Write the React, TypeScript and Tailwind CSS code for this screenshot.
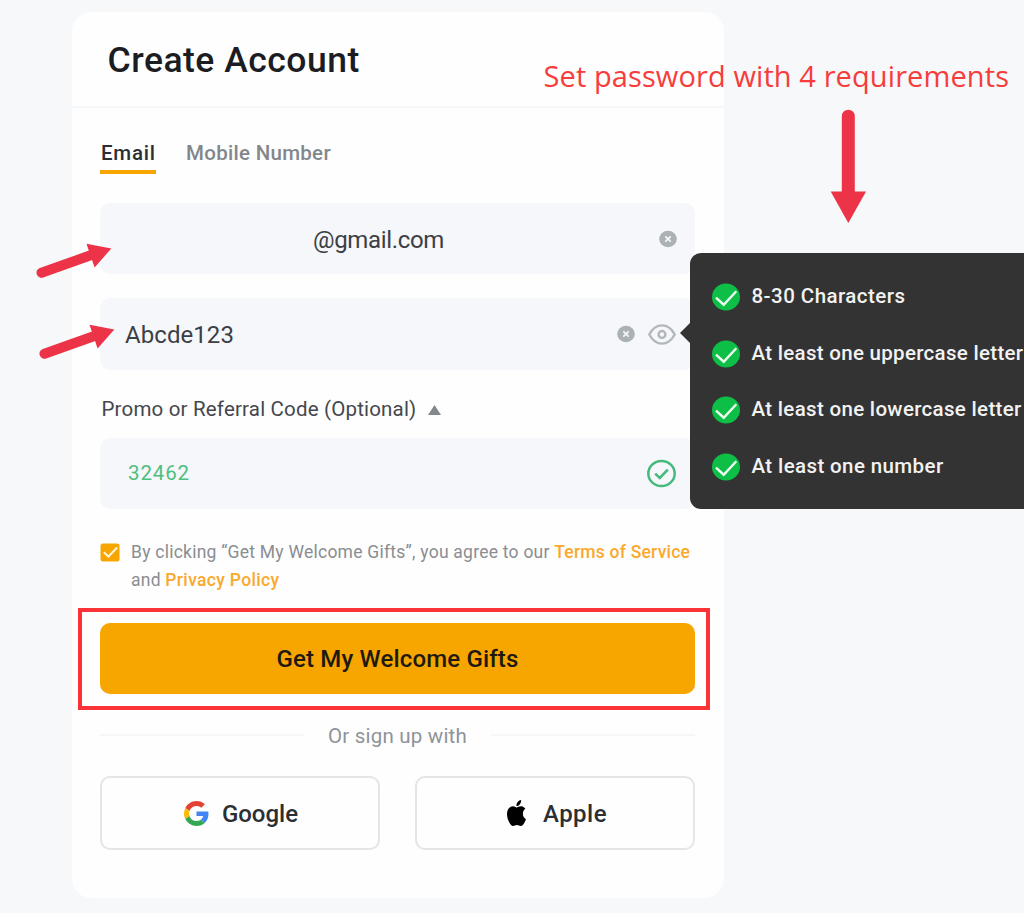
import type { ReactNode } from "react";

function ClearIcon() {
  return (
    <svg className="h-[18px] w-[18px] shrink-0" viewBox="0 0 18 18" fill="none">
      <ellipse cx="9" cy="9" rx="8.8" ry="8.3" fill="#acb1b4" />
      <path d="M6.3 6.4l5.4 5.2M11.7 6.4l-5.4 5.2" stroke="#f4f6f9" strokeWidth="1.8" />
    </svg>
  );
}

function EyeIcon() {
  return (
    <svg className="h-[21px] w-[28px] shrink-0" viewBox="0 0 28 21" fill="none" stroke="#b3b8bb" strokeWidth="2.4">
      <path d="M1.3 10.5C4.400 4.600 8.800 1.400 14 1.400s9.600 3.200 12.700 9.100c-3.100 5.900-7.500 9.100-12.700 9.100S4.400 16.400 1.300 10.500Z" strokeLinejoin="round" />
      <circle cx="14" cy="10.500" r="3.400" strokeWidth="2.500" />
    </svg>
  );
}

function ValidIcon() {
  return (
    <svg className="h-[29px] w-[29px] shrink-0" viewBox="0 0 29 29" fill="none" stroke="#46b97c">
      <ellipse cx="14.500" cy="14.500" rx="13.200" ry="12.600" strokeWidth="2.500" />
      <path d="M8.200 14.600l4.600 4.300 8-8.200" strokeWidth="2.600" />
    </svg>
  );
}

function RuleIcon() {
  return (
    <svg className="h-[28px] w-[28px] shrink-0" viewBox="0 0 28 28" fill="none">
      <ellipse cx="14" cy="14" rx="14" ry="13.500" fill="#0dbf47" />
      <path d="M4 14.700l7.700 7L24.300 8.300" stroke="#f1fff3" strokeWidth="2.400" />
    </svg>
  );
}

function CheckboxIcon() {
  return (
    <svg className="mt-[5px] h-[19px] w-[20px] shrink-0" viewBox="0 0 20 19" fill="none">
      <rect x="0.500" y="0.500" width="19" height="18" rx="2.500" fill="#f7a600" />
      <path d="M3.800 9.200l4.600 4.300 8.800-9" stroke="#fff4da" strokeWidth="2" />
    </svg>
  );
}

function GoogleIcon() {
  return (
    <svg className="h-[25px] w-[25px] shrink-0" viewBox="0 0 48 48">
      <path fill="#e34133" d="M24 9.500c3.540 0 6.710 1.220 9.210 3.600l6.850-6.850C35.900 2.380 30.470 0 24 0 14.620 0 6.510 5.380 2.560 13.220l7.980 6.190C12.430 13.720 17.740 9.500 24 9.500z" />
      <path fill="#4285f4" d="M46.980 24.550c0-1.570-.15-3.090-.38-4.550H24v9.020h12.940c-.58 2.960-2.260 5.480-4.780 7.180l7.730 6c4.510-4.180 7.090-10.360 7.090-17.650z" />
      <path fill="#fbbc05" d="M10.530 28.590c-.48-1.450-.76-2.990-.76-4.590s.27-3.140.76-4.590l-7.980-6.190C.92 16.460 0 20.120 0 24c0 3.880.92 7.540 2.560 10.780l7.970-6.190z" />
      <path fill="#34a853" d="M24 48c6.480 0 11.930-2.130 15.890-5.810l-7.730-6c-2.150 1.450-4.920 2.300-8.160 2.300-6.260 0-11.570-4.220-13.470-9.910l-7.980 6.190C6.510 42.620 14.620 48 24 48z" />
    </svg>
  );
}

function AppleIcon() {
  return (
    <svg className="h-[26px] w-[21px] shrink-0" viewBox="1.200 0 21.600 24" preserveAspectRatio="none" fill="#000">
      <path d="M12.152 6.896c-.948 0-2.415-1.078-3.960-1.040-2.040.027-3.910 1.183-4.961 3.014-2.117 3.675-.546 9.103 1.519 12.090 1.013 1.454 2.208 3.090 3.792 3.039 1.520-.065 2.090-.987 3.935-.987 1.831 0 2.350.987 3.960.948 1.637-.026 2.676-1.480 3.676-2.948 1.156-1.688 1.636-3.325 1.662-3.415-.039-.013-3.182-1.221-3.220-4.857-.026-3.040 2.480-4.494 2.597-4.559-1.429-2.090-3.623-2.324-4.390-2.376-2-.156-3.675 1.090-4.610 1.090zM15.530 3.830c.843-1.012 1.400-2.427 1.245-3.830-1.207.052-2.662.805-3.532 1.818-.78.896-1.454 2.338-1.273 3.714 1.338.104 2.715-.688 3.559-1.701" />
    </svg>
  );
}

function SideArrow() {
  return (
    <svg className="h-[36px] w-[77px]" viewBox="0 0 77 36">
      <path d="M6.500 29.700L57 11.800" stroke="#ec3347" strokeWidth="10" strokeLinecap="round" />
      <path d="M51.500 0.800L76.300 5.500 59.600 24.500Z" fill="#ec3347" />
    </svg>
  );
}

function Rule({ children, className }: { children: ReactNode; className: string }) {
  return (
    <li className="flex h-[28px] items-center gap-[11.500px]">
      <RuleIcon />
      <span className={`-mt-[2px] text-[20.5px] font-medium leading-[28px] whitespace-nowrap text-[#f2f2f2] ${className}`}>
        {children}
      </span>
    </li>
  );
}

export default function App() {
  return (
    <div className="relative h-[913px] w-[1024px] overflow-hidden bg-[#f6f8fa] pt-[12px] pl-[72px] font-['Roboto',sans-serif]">
      <main className="h-[886px] w-[652px] rounded-[20px] bg-[#fefefe]">
        <header className="h-[96px] border-b-2 border-[#f6f7f9] pt-[26px] pl-[35.500px]">
          <h1 className="text-[35.5px] font-medium leading-[44px] tracking-[0.500px] text-[#1b1d22]">Create Account</h1>
        </header>

        <div className="flex flex-col pr-[29px] pl-[28px]">
          <nav className="flex items-start gap-[30px] pt-[32px] text-[20.5px] font-medium leading-[26px]">
            <span className="h-[34px] w-[56px] border-b-4 border-[#f7a600] pl-px tracking-[0.75px] text-[#2b2e33]">Email</span>
            <span className="tracking-[0.29px] text-[#83878c]">Mobile Number</span>
          </nav>

          <div className="mt-[29px] flex h-[71px] items-center rounded-[10px] bg-[#f5f7fa] pr-[18px] pl-[213px]">
            <span className="mt-[3px] flex-1 text-[24px] leading-[30px] tracking-[-0.34px] text-[#3c3f45]">@gmail.com</span>
            <ClearIcon />
          </div>

          <div className="mt-[24px] flex h-[72px] items-center rounded-[10px] bg-[#f5f7fa] pr-[19px] pl-[25px]">
            <span className="mt-[2px] flex-1 text-[24px] leading-[30px] tracking-[0.07px] text-[#3c3f45]">Abcde123</span>
            <ClearIcon />
            <span className="ml-[13px] flex">
              <EyeIcon />
            </span>
          </div>

          <div className="mt-[27px] flex h-[24px] items-center gap-[12px] pl-[1.500px]">
            <span className="text-[20.5px] leading-[24px] tracking-[0.18px] text-[#44474d]">Promo or Referral Code (Optional)</span>
            <svg className="mt-px h-[10px] w-[13px]" viewBox="0 0 13 10" fill="#85888b">
              <path d="M6.500 0L13 10H0Z" />
            </svg>
          </div>

          <div className="mt-[17px] flex h-[71px] items-center rounded-[10px] bg-[#f5f7fa] pr-[19px] pl-[28px]">
            <span className="-mt-px flex-1 text-[20.5px] leading-[28px] tracking-[0.88px] text-[#4fbf7f]">32462</span>
            <ValidIcon />
          </div>

          <div className="mt-[29px] flex gap-[11px] text-[17.5px] leading-[28px] text-[#8a8d92]">
            <CheckboxIcon />
            <p className="whitespace-nowrap tracking-[0.24px]">
              By clicking “Get My Welcome Gifts”, you agree to our{" "}
              <a className="font-medium tracking-[0.22px] text-[#f9a92b]">Terms of Service</a>
              <br />
              and <a className="font-medium tracking-[0.32px] text-[#f9a92b]">Privacy Policy</a>
            </p>
          </div>

          <div className="relative mt-[29px]">
            <button className="h-[71px] w-full rounded-[10px] bg-[#f7a600] text-[24px] font-medium leading-[30px] tracking-[0.16px] text-[#1e1a10]">
              Get My Welcome Gifts
            </button>
            <div className="pointer-events-none absolute -top-[15px] -right-[15px] -bottom-[16px] -left-[22px] border-4 border-[#fb3336]" />
          </div>

          <div className="mt-[29px] flex h-[24px] items-center gap-[24px]">
            <div className="h-[2px] flex-1 bg-[#f5f6f7]" />
            <span className="mt-[2px] text-[20.5px] leading-[24px] tracking-[0.21px] text-[#8f9399]">Or sign up with</span>
            <div className="h-[2px] flex-1 bg-[#f5f6f7]" />
          </div>

          <div className="mt-[29px] grid grid-cols-2 gap-[35px] text-[24px] font-medium leading-[30px] text-[#2b2e33]">
            <button className="flex h-[74px] items-center justify-center gap-[13px] rounded-[10px] border-2 border-[#e3e5e7] pl-[2px]">
              <GoogleIcon />
              <span className="mt-[2px]">Google</span>
            </button>
            <button className="flex h-[74px] items-center justify-center gap-[16px] rounded-[10px] border-2 border-[#e3e5e7] pl-[3px]">
              <AppleIcon />
              <span className="mt-[2px] tracking-[0.47px]">Apple</span>
            </button>
          </div>
        </div>
      </main>

      <p className="absolute top-[56px] left-[543.500px] font-['Open_Sans',sans-serif] text-[29px] leading-[40px] tracking-[0.1px] whitespace-nowrap text-[#f73d3c]">
        Set password with 4 requirements
      </p>

      <svg className="absolute top-[109px] left-[830px] h-[115px] w-[37px]" viewBox="0 0 37 115">
        <path d="M18.300 7.200V85" stroke="#ec3347" strokeWidth="13" strokeLinecap="round" />
        <path d="M0.700 82.500H36L18.300 114Z" fill="#ec3347" />
      </svg>

      <div className="absolute top-[243px] left-[35px]">
        <SideArrow />
      </div>
      <div className="absolute top-[324px] left-[38px]">
        <SideArrow />
      </div>

      <aside className="absolute top-[253px] left-[690px] h-[256px] w-[334px] rounded-l-[11px] bg-[#333333] pt-[30px] pl-[22px]">
        <svg className="absolute top-[69px] -left-[10px] h-[22px] w-[11px]" viewBox="0 0 11 22" fill="#333333">
          <path d="M11 0V22L0 11Z" />
        </svg>
        <ul className="flex flex-col gap-[28.500px]">
          <Rule className="tracking-[0.46px]">8-30 Characters</Rule>
          <Rule className="tracking-[0.3px]">At least one uppercase letter</Rule>
          <Rule className="tracking-[0.32px]">At least one lowercase letter</Rule>
          <Rule className="tracking-[0.39px]">At least one number</Rule>
        </ul>
      </aside>
    </div>
  );
}
